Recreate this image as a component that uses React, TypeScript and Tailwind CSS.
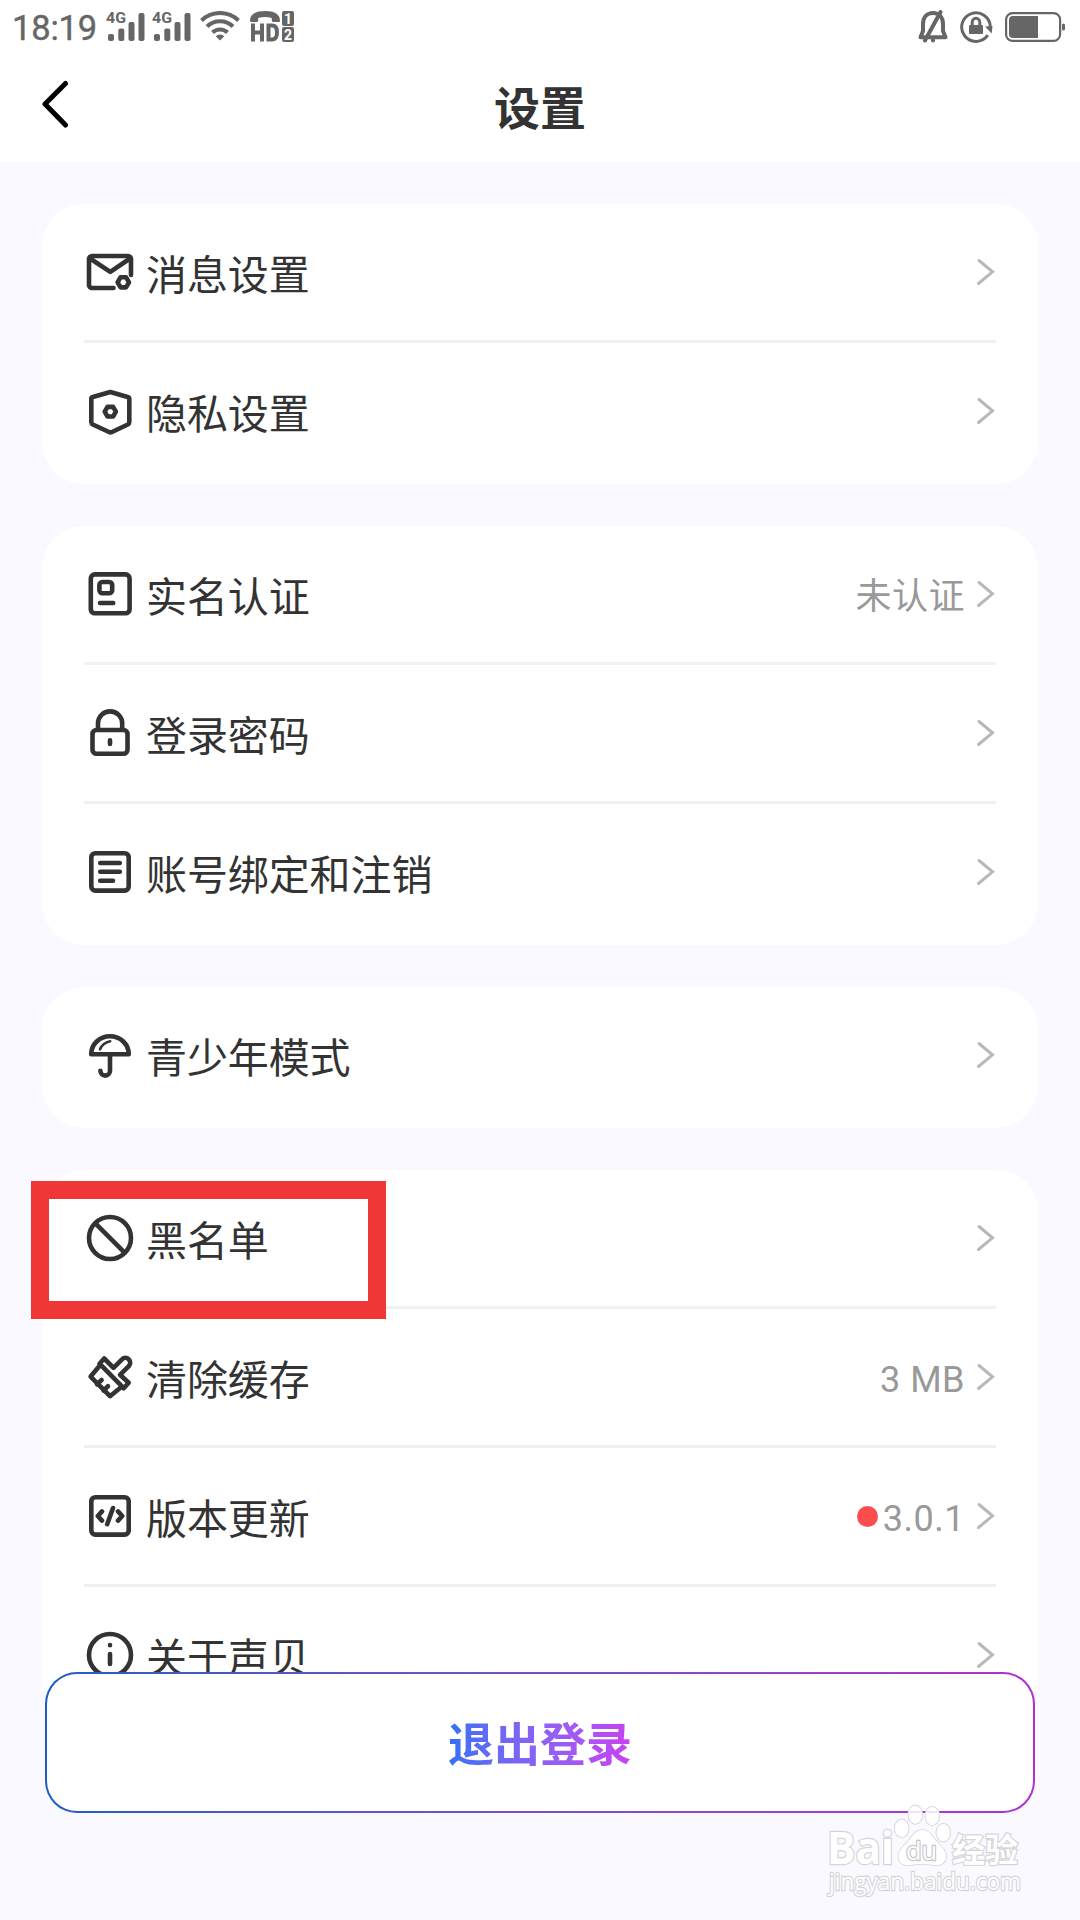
import React from 'react';

type Item = {
    label: string;
    icon: React.ReactNode;
    value?: string;
    dot?: boolean;
};

const ICONS = {
    mail: (
        <>
            <path d="M29.5 42H8a3 3 0 0 1-3-3V13a3 3 0 0 1 3-3h36a3 3 0 0 1 3 3v16" />
            <path d="M6 12.5l20.3 13.3L46 12.5" />
            <path d="M36.6 31.2h5.4l3 5.1-3 5.1h-5.4l-3-5.1z" />
        </>
    ),
    shield: (
        <>
            <path d="M26.3 7l17.4 5a2 2 0 0 1 1.6 2v23a3 3 0 0 1-1.5 2.5L28 47a3 3 0 0 1-3 0L8.8 39.5A3 3 0 0 1 7.3 37V14a2 2 0 0 1 1.6-2z" />
            <path d="M23.5 21.9h5.6l2.8 4.8-2.8 4.8h-5.6l-2.8-4.8z" />
        </>
    ),
    idCard: (
        <>
            <rect x="6.8" y="6.4" width="38.8" height="38.8" rx="4" />
            <rect x="15.4" y="14" width="12.8" height="11.2" rx="3" />
            <path d="M16 35h13.2" />
        </>
    ),
    lock: (
        <>
            <rect x="8.5" y="23" width="35" height="23.8" rx="4" />
            <path d="M14 22.5v-6a12.1 12.1 0 0 1 24.2 0v6M26 33.2v3.8" />
        </>
    ),
    doc: (
        <>
            <rect x="7.3" y="7.2" width="37.4" height="37.4" rx="4" />
            <path d="M16.2 17h19.6M16.2 25.8h19.6M16.2 34.7H29" />
        </>
    ),
    umbrella: (
        <>
            <path d="M7.2 25.2a18.8 18 0 0 1 37.6 0z" />
            <path d="M26 26v15.8a4.8 4.8 0 0 1-9.6 0" />
            <path d="M16 20.3c1.8-4.2 5-7 10.2-8" strokeWidth="2.6" />
        </>
    ),
    ban: (
        <>
            <circle cx="26" cy="26" r="21" />
            <path d="M11.4 11.4l29.2 29.2" />
        </>
    ),
    brush: (
        <>
            <path d="M15 15.6L6.6 25.6 26 45.2 37 36.3" />
            <path d="M15.5 12.7L20.2 7.5l9.3 9.3L38 8.3a4.8 4.8 0 0 1 6.8 6.8L36 23.8l8.7 8-5 5.4z" />
            <path d="M13 33.2l4.6-4.2M19.6 39.6l4.4-4.4" />
        </>
    ),
    code: (
        <>
            <rect x="7.3" y="7.2" width="37.4" height="37.4" rx="4" />
            <path d="M18 21.4L13.8 26l4.2 4.6M34 21.4l4.2 4.6-4.2 4.6M29 18l-5.8 16.2" />
        </>
    ),
    info: (
        <>
            <circle cx="26" cy="26" r="21" />
            <path d="M26 16v.2M26 25v10" />
        </>
    ),
};

const GROUPS: Item[][] = [
    [
        { label: '消息设置', icon: ICONS.mail },
        { label: '隐私设置', icon: ICONS.shield },
    ],
    [
        { label: '实名认证', icon: ICONS.idCard, value: '未认证' },
        { label: '登录密码', icon: ICONS.lock },
        { label: '账号绑定和注销', icon: ICONS.doc },
    ],
    [{ label: '青少年模式', icon: ICONS.umbrella }],
    [
        { label: '黑名单', icon: ICONS.ban },
        { label: '清除缓存', icon: ICONS.brush, value: '3 MB' },
        { label: '版本更新', icon: ICONS.code, value: '3.0.1', dot: true },
        { label: '关于声贝', icon: ICONS.info },
    ],
];

function Signal() {
    return (
        <svg width="40" height="36" viewBox="0 -6 40 36" fill="#666">
            <text x="0" y="10.3" fontSize="14" fontWeight="700" fontFamily="Roboto, sans-serif" textLength="20" lengthAdjust="spacingAndGlyphs">4G</text>
            <rect x="2" y="21" width="6" height="7" rx="2" />
            <rect x="12.3" y="15.5" width="6" height="12.5" rx="2" />
            <rect x="22.5" y="9" width="6" height="19" rx="2" />
            <rect x="32.5" y="0" width="6" height="28" rx="2" />
        </svg>
    );
}

function StatusBar() {
    return (
        <div className="flex h-[54px] items-start pl-3 pr-[14px] text-[#666]">
            <span className="mt-[8px] w-[94px] text-[34.5px] leading-[41px] tracking-[-0.2px] [-webkit-text-stroke:0.4px_#666]">18:19</span>
            <div className="mt-[7px] flex">
                <Signal />
                <span className="w-[6px]" />
                <Signal />
            </div>
            <svg className="ml-2 mt-[11px]" width="40" height="30" viewBox="0 0 40 30" fill="none" stroke="#666" strokeWidth="4">
                <path d="M1.5 9.5a26.5 26.5 0 0 1 37 0" />
                <path d="M7 15.5a18.5 18.5 0 0 1 26 0" />
                <path d="M12.5 21.5a10.8 10.8 0 0 1 15 0" />
                <path d="M20 29.5l-4.3-4.3a6 6 0 0 1 8.6 0z" fill="#666" stroke="none" />
            </svg>
            <svg className="ml-[10px] mt-[11px]" width="45" height="31" viewBox="0 0 45 31" fill="#666">
                <path d="M0 9.500C0 3 6 0 15 0s15 3 15 9.500c0 1.200-.5 1.500-1.500 1.500h-5c-1.200 0-1.700-.6-1.700-1.800V7c-4-1.300-9.600-1.300-13.600 0v2.200c0 1.200-.5 1.800-1.700 1.800h-5C.5 11 0 10.700 0 9.500z" />
                <path d="M3 12.500v18M12 12.500v18M3 21.500h9M18.500 14.500v14h3.500c3.500 0 5-2.500 5-7s-1.500-7-5-7z" fill="none" stroke="#666" strokeWidth="4" />
                <rect x="32" y="0" width="12" height="15" rx="2" />
                <rect x="32" y="16" width="12" height="15" rx="2" />
                <text x="38" y="12.5" fontSize="14" fontWeight="700" fill="#fff" textAnchor="middle" fontFamily="Roboto, sans-serif">1</text>
                <text x="38" y="28.5" fontSize="14" fontWeight="700" fill="#fff" textAnchor="middle" fontFamily="Roboto, sans-serif">2</text>
            </svg>
            <div className="ml-auto flex">
                <svg className="mt-[10px]" width="30" height="34" viewBox="0 0 30 34" fill="none" stroke="#666" strokeWidth="4" strokeLinejoin="round" strokeLinecap="round">
                    <path d="M5 21V14C5 7 9 3 15 3s10 4 10 11v7l2.500 6.200h-25z" />
                    <path d="M22.500 2L7 30.500" />
                    <path d="M15 30v.5" />
                </svg>
                <svg className="ml-3 mt-[11px]" width="33" height="32" viewBox="0 0 33 32" fill="none" stroke="#666" strokeWidth="3">
                    <path d="M27.800 24.200A14.300 14.300 0 1 1 30.300 16" />
                    <path d="M25 15.500l7.500-.5-.8 7.500z" fill="#666" stroke="none" />
                    <rect x="9" y="14" width="14" height="9" rx="1" fill="#666" stroke="none" />
                    <path d="M12.200 14.500v-3a3.800 4.200 0 0 1 7.600 0v3" />
                </svg>
                <svg className="ml-3 mt-[12px]" width="61" height="30" viewBox="0 0 61 30" fill="none">
                    <rect x="1.1" y="1.1" width="54" height="27.8" rx="6.5" stroke="#666" strokeWidth="2.2" />
                    <path d="M8 4h25v22H8a4 4 0 0 1-4-4V8a4 4 0 0 1 4-4z" fill="#666" />
                    <rect x="57" y="11.5" width="3" height="7" rx="1.5" fill="#666" />
                </svg>
            </div>
        </div>
    );
}

function Row({ item, last }: { item: Item; last: boolean }) {
    return (
        <div className={last ? 'mb-[5px]' : 'border-b-[3px] border-[#f1f1f1]'}>
            <div className="flex h-[136px] items-center">
                <svg width="52" height="52" viewBox="0 0 52 52" fill="none" stroke="#333" strokeWidth="4.6" strokeLinecap="round" strokeLinejoin="round">
                    {item.icon}
                </svg>
                <span className="ml-[10px] mt-[7px] text-[41px] leading-[56px] tracking-[-0.1px] text-[#333]">{item.label}</span>
                <div className="ml-auto flex items-center">
                    {item.dot && <span className="mr-[5px] size-[21px] rounded-full bg-[#ff4c4c]" />}
                    {item.value && (
                        <span className="mr-[11px] mt-[6px] text-[36px] leading-[50px] tracking-[0.5px] text-[#999]">{item.value}</span>
                    )}
                    <svg width="20" height="28" viewBox="0 0 20 28" fill="none" stroke="#b8b8b8" strokeWidth="3" strokeLinecap="round">
                        <path d="M3 2.5l13.5 11.3L2.5 25.5" />
                    </svg>
                </div>
            </div>
        </div>
    );
}

function Watermark() {
    return (
        <svg
            className="absolute left-[820px] top-[1800px]"
            width="210"
            height="112"
            viewBox="0 0 210 112"
            fill="#fff"
            stroke="#d4d4d9"
            strokeWidth="2.4"
            paintOrder="stroke"
            fontFamily="'Open Sans', 'Noto Sans CJK SC', sans-serif"
        >
            <text x="7" y="64" fontSize="44" fontWeight="700" textLength="67" lengthAdjust="spacingAndGlyphs">Bai</text>
            <g fillOpacity="0.85" strokeWidth="1.6">
                <ellipse cx="81.7" cy="28.3" rx="7" ry="9" />
                <ellipse cx="95.3" cy="14.7" rx="7" ry="9.3" />
                <ellipse cx="112.3" cy="16" rx="7" ry="9.3" />
                <ellipse cx="123.3" cy="32.7" rx="7" ry="9" />
            </g>
            <path d="M102 30c8 0 10 7 16 13 5 5 9 9 8 15-1 6-7 8-12 7-8-1.500-16-1.500-23 0-6 1-12-1-12.500-7-.5-6 3-10 8-15 6-6 8-13 15.500-13z" strokeWidth="1.6" />
            <text x="86" y="60" fontSize="26" stroke="#c4c4ca" strokeWidth="2.4" textLength="31" lengthAdjust="spacingAndGlyphs">du</text>
            <text x="132" y="61.5" fontSize="33" fontWeight="700">经验</text>
            <text x="9" y="90" fontSize="24" textLength="192" lengthAdjust="spacingAndGlyphs">jingyan.baidu.com</text>
        </svg>
    );
}

export default function App() {
    return (
        <div className="relative flex h-[1920px] w-[1080px] flex-col overflow-hidden bg-[#faf9ff] font-[Roboto,'Noto_Sans_CJK_SC',sans-serif]">
            <header className="h-[162px] shrink-0 bg-white">
                <StatusBar />
                <div className="grid h-[108px] grid-cols-3 items-center px-[41px]">
                    <svg className="-mt-[8px]" width="28" height="50" viewBox="0 0 28 50" fill="none" stroke="#000" strokeWidth="5" strokeLinecap="round" strokeLinejoin="round">
                        <path d="M24.5 4.5L4 25l20.5 21" />
                    </svg>
                    <h1 className="mt-[2px] text-center text-[46px] font-bold leading-[60px] text-[#333]">设置</h1>
                </div>
            </header>

            <main className="flex h-[1528px] shrink-0 flex-col gap-[42px] overflow-hidden px-[42px] pt-[42px]">
                {GROUPS.map((group, i) => (
                    <section key={i} className="shrink-0 rounded-[42px] bg-white px-[42px]">
                        {group.map((item, j) => (
                            <Row key={item.label} item={item} last={j === group.length - 1} />
                        ))}
                    </section>
                ))}
            </main>

            {/* Gradient outline: outer gradient, white fill inset by 2px */}
            <button className="relative mx-[45px] -mt-[18px] h-[141px] shrink-0 rounded-[32px] bg-linear-to-r from-[#1b5cc4] to-[#b02fd0] p-[2px]">
                <span className="flex size-full items-center justify-center rounded-[30px] bg-white">
                    <span className="mt-1 bg-linear-to-r from-[#2f70f6] to-[#c840f2] bg-clip-text text-[46px] font-bold leading-[64px] text-transparent">
                        退出登录
                    </span>
                </span>
            </button>

            {/* Highlight around the blacklist entry */}
            <div className="absolute left-[31px] top-[1181px] h-[138px] w-[355px] border-[18px] border-[#f03737]" />

            <Watermark />
        </div>
    );
}
